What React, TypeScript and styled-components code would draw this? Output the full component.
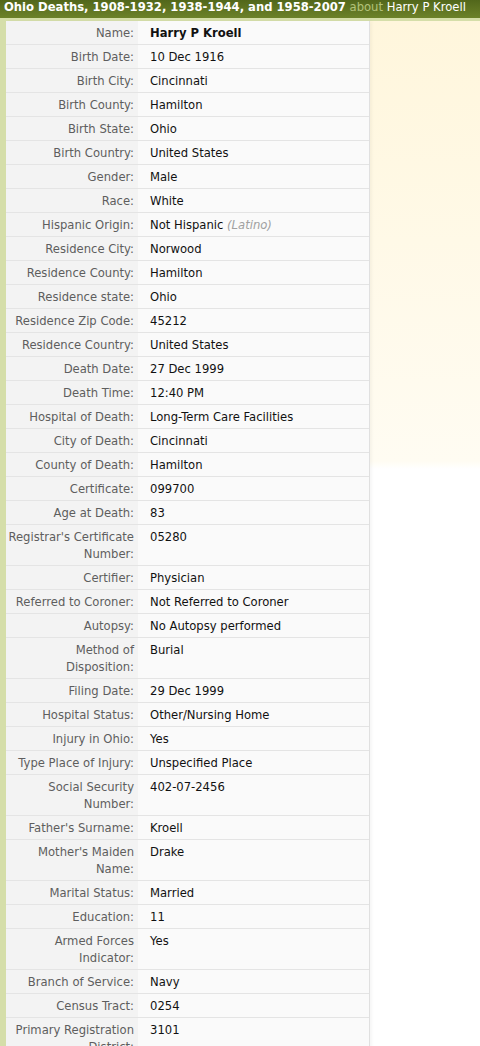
import React from "react";
import styled, { createGlobalStyle } from "styled-components";

const Global = createGlobalStyle`
  html, body { margin: 0; padding: 0; background: #ffffff; }
  body { font-family: "DejaVu Sans", Verdana, sans-serif; }
`;

const Page = styled.div`
  width: 480px;
  min-height: 1046px;
  overflow: hidden;
`;

const Header = styled.div`
  background: linear-gradient(#52671b, #6c8229);
  color: #ffffff;
  font-size: 11.6px;
  line-height: 14px;
  white-space: nowrap;
  padding-left: 4px;
  border-bottom: 3px solid #d5dea9;
  box-sizing: border-box;
  height: 21px;
  overflow: hidden;
`;

const Title = styled.span`
  font-weight: bold;
`;

const About = styled.span`
  color: #b3c27a;
  font-size: 11.6px;
`;

const Who = styled.span`
  font-size: 11.6px;
`;

const Body = styled.div`
  display: flex;
  align-items: flex-start;
  background: linear-gradient(#fff6dc 0px, #fffcf2 440px, #ffffff 448px);
  border-left: 6px solid #d5dea9;
`;

const Table = styled.div`
  width: 363px;
  border-right: 1px solid #e0e0e0;
  box-shadow: 2px 0 3px rgba(0, 0, 0, 0.04);
  font-size: 11.6px;
  line-height: 17px;
`;

const Row = styled.div`
  display: grid;
  grid-template-columns: 132px 1fr;
  border-bottom: 1px solid #e4e4e4;
`;

const Label = styled.div`
  background: #f3f3f3;
  color: #5e5e5e;
  text-align: right;
  padding: 4px 4px 2px 0;
  white-space: pre;
`;

const Value = styled.div<{ $bold?: boolean }>`
  background: #fafafa;
  color: #111111;
  padding: 4px 0 2px 12px;
  font-weight: ${(p) => (p.$bold ? "bold" : "normal")};
`;

const Note = styled.span`
  color: #a0a0a0;
  font-style: italic;
`;

type Item = { label: string; value: React.ReactNode; bold?: boolean };

const rows: Item[] = [
  { label: "Name:", value: "Harry P Kroell", bold: true },
  { label: "Birth Date:", value: "10 Dec 1916" },
  { label: "Birth City:", value: "Cincinnati" },
  { label: "Birth County:", value: "Hamilton" },
  { label: "Birth State:", value: "Ohio" },
  { label: "Birth Country:", value: "United States" },
  { label: "Gender:", value: "Male" },
  { label: "Race:", value: "White" },
  {
    label: "Hispanic Origin:",
    value: (
      <>
        Not Hispanic <Note>(Latino)</Note>
      </>
    ),
  },
  { label: "Residence City:", value: "Norwood" },
  { label: "Residence County:", value: "Hamilton" },
  { label: "Residence state:", value: "Ohio" },
  { label: "Residence Zip Code:", value: "45212" },
  { label: "Residence Country:", value: "United States" },
  { label: "Death Date:", value: "27 Dec 1999" },
  { label: "Death Time:", value: "12:40 PM" },
  { label: "Hospital of Death:", value: "Long-Term Care Facilities" },
  { label: "City of Death:", value: "Cincinnati" },
  { label: "County of Death:", value: "Hamilton" },
  { label: "Certificate:", value: "099700" },
  { label: "Age at Death:", value: "83" },
  { label: "Registrar's Certificate\nNumber:", value: "05280" },
  { label: "Certifier:", value: "Physician" },
  { label: "Referred to Coroner:", value: "Not Referred to Coroner" },
  { label: "Autopsy:", value: "No Autopsy performed" },
  { label: "Method of\nDisposition:", value: "Burial" },
  { label: "Filing Date:", value: "29 Dec 1999" },
  { label: "Hospital Status:", value: "Other/Nursing Home" },
  { label: "Injury in Ohio:", value: "Yes" },
  { label: "Type Place of Injury:", value: "Unspecified Place" },
  { label: "Social Security\nNumber:", value: "402-07-2456" },
  { label: "Father's Surname:", value: "Kroell" },
  { label: "Mother's Maiden\nName:", value: "Drake" },
  { label: "Marital Status:", value: "Married" },
  { label: "Education:", value: "11" },
  { label: "Armed Forces\nIndicator:", value: "Yes" },
  { label: "Branch of Service:", value: "Navy" },
  { label: "Census Tract:", value: "0254" },
  { label: "Primary Registration\nDistrict:", value: "3101" },
];

export default function App() {
  return (
    <Page>
      <Global />
      <Header>
        <Title>Ohio Deaths, 1908-1932, 1938-1944, and 1958-2007</Title>{" "}
        <About>about</About> <Who>Harry P Kroell</Who>
      </Header>
      <Body>
        <Table>
          {rows.map((r) => (
            <Row key={r.label}>
              <Label>{r.label}</Label>
              <Value $bold={r.bold}>{r.value}</Value>
            </Row>
          ))}
        </Table>
      </Body>
    </Page>
  );
}
